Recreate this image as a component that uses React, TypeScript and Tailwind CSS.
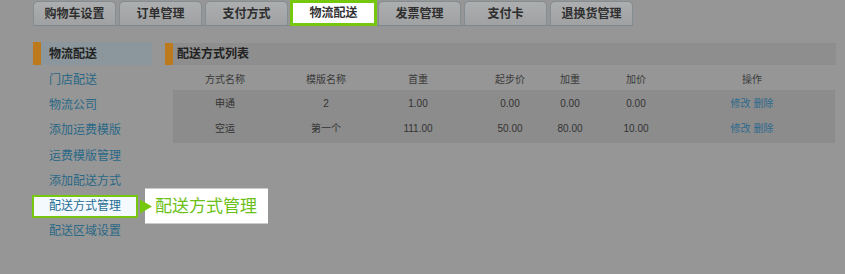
import React from "react";

const tabs = ["购物车设置", "订单管理", "支付方式", "物流配送", "发票管理", "支付卡", "退换货管理"];

const menu = ["门店配送", "物流公司", "添加运费模版", "运费模版管理", "添加配送方式", "配送方式管理", "配送区域设置"];

const columns = ["方式名称", "模版名称", "首重", "起步价", "加重", "加价", "操作"];

const rows = [
    ["申通", "2", "1.00", "0.00", "0.00", "0.00"],
    ["空运", "第一个", "111.00", "50.00", "80.00", "10.00"],
];

export default function App() {
    return (
        <div className="w-[845px] h-[274px] overflow-hidden bg-[#969696] font-['Liberation_Sans','Noto_Sans_CJK_SC',sans-serif]">
            {/* Top tabs */}
            <div className="ml-[33px] w-[600px] h-[26px] flex items-end gap-[3px] border-b border-[#7d888e]">
                {tabs.map((t) =>
                    t === "物流配送" ? (
                        <div
                            key={t}
                            className="relative z-10 -ml-px -mr-[2px] -mb-px w-[87px] h-[26px] border-[3px] border-[#76c80e] bg-white flex items-center justify-center text-[12px] font-bold text-[#333]"
                        >
                            {t}
                        </div>
                    ) : (
                        <div
                            key={t}
                            className="w-[83px] h-[24px] rounded-t-[5px] border border-b-0 border-[#838d92] bg-linear-to-b from-[#acaeaf] to-[#9fa1a2] flex items-center justify-center text-[12px] font-bold text-[#2e2e2e]"
                        >
                            {t}
                        </div>
                    )
                )}
            </div>

            <div className="flex mt-[16px]">
                {/* Sidebar */}
                <div className="ml-[33px] w-[119px]">
                    <div className="h-[23px] flex">
                        <div className="w-[8px] bg-[#bd7a1d]" />
                        <div className="flex-1 bg-[#8b979c] pl-[8px] flex items-center text-[12px] font-bold text-[#222]">
                            物流配送
                        </div>
                    </div>
                    <div className="pt-[2px]">
                        {menu.map((m) =>
                            m === "配送方式管理" ? (
                                <div key={m} className="relative h-[25.3px] flex items-center">
                                    <div className="-ml-px w-[106px] h-[23px] border-2 border-[#76c80e] bg-[#f3f9fc] flex items-center pl-[15px] text-[12px] text-[#1f6d94]">
                                        {m}
                                    </div>
                                    {/* Callout */}
                                    <div className="absolute left-[107px] top-1/2 -translate-y-1/2 flex items-center">
                                        <div className="relative z-10 w-0 h-0 border-y-[7.5px] border-y-transparent border-l-[12px] border-l-[#76c80e]" />
                                        <div className="-ml-[7px] w-[123px] h-[35px] bg-white flex items-center pl-[10px] text-[17px] text-[#6cbf18] whitespace-nowrap">
                                            {m}
                                        </div>
                                    </div>
                                </div>
                            ) : (
                                <div key={m} className="h-[25.3px] flex items-center pl-[16px] text-[12px] text-[#2a6886]">
                                    {m}
                                </div>
                            )
                        )}
                    </div>
                </div>

                {/* Main */}
                <div className="ml-[13px] w-[671px] mt-px">
                    <div className="h-[22px] flex">
                        <div className="w-[8px] bg-[#bd7a1d]" />
                        <div className="flex-1 bg-[#8e8e8e] pl-[4px] flex items-center text-[12px] font-bold text-[#222]">
                            配送方式列表
                        </div>
                    </div>

                    <div className="ml-[8px] w-[662px]">
                        <div className="mt-[2px] h-[22px] pt-[2px] grid grid-cols-[104px_98px_86px_98px_22px_110px_122px] items-center text-[10px] text-[#3a3a3a]">
                            {columns.map((c) => (
                                <div key={c} className="flex justify-center whitespace-nowrap">
                                    {c}
                                </div>
                            ))}
                        </div>
                        <div className="mt-px bg-[#8c8c8c] pb-[3px]">
                            {rows.map((r) => (
                                <div
                                    key={r[0]}
                                    className="h-[25px] pt-[2px] grid grid-cols-[104px_98px_86px_98px_22px_110px_122px] items-center text-[10px] text-[#333]"
                                >
                                    {r.map((v, i) => (
                                        <div key={i} className="flex justify-center whitespace-nowrap">
                                            {v}
                                        </div>
                                    ))}
                                    <div className="flex justify-center whitespace-nowrap text-[#2c6a8e]">
                                        修改 删除
                                    </div>
                                </div>
                            ))}
                        </div>
                    </div>
                </div>
            </div>
        </div>
    );
}
